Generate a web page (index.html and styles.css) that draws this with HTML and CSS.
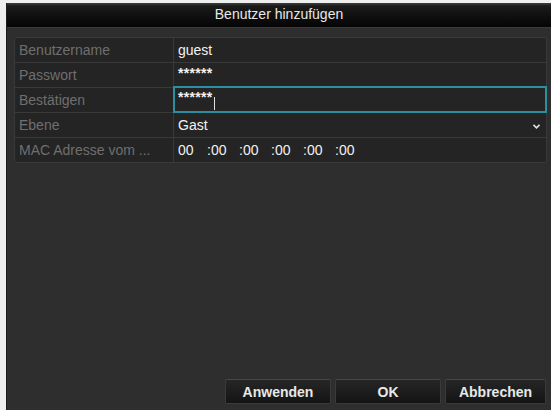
FILE: index.html
```html
<!DOCTYPE html>
<html lang="de">
<head>
<meta charset="utf-8">
<title>Benutzer hinzufügen</title>
<link rel="stylesheet" href="styles.css">
</head>
<body>
<div class="dialog">
  <div class="title">Benutzer hinzufügen</div>
  <div class="form">
    <div class="row">
      <div class="label">Benutzername</div>
      <div class="value">guest</div>
    </div>
    <div class="row">
      <div class="label">Passwort</div>
      <div class="value stars">******</div>
    </div>
    <div class="row">
      <div class="label">Bestätigen</div>
      <div class="value stars focused">******<span class="caret"></span></div>
    </div>
    <div class="row">
      <div class="label">Ebene</div>
      <div class="value select">Gast<svg class="arrow" width="7" height="5" viewBox="0 0 7 5"><path d="M0.5 0.8 L3.5 3.8 L6.5 0.8" fill="none" stroke="#e0e0e0" stroke-width="1.6"/></svg></div>
    </div>
    <div class="row">
      <div class="label">MAC Adresse vom ...</div>
      <div class="value mac"><span class="oct first">00</span><span class="oct">:00</span><span class="oct">:00</span><span class="oct">:00</span><span class="oct">:00</span><span class="oct">:00</span></div>
    </div>
  </div>
  <div class="spacer"></div>
  <div class="buttons">
    <button class="btn">Anwenden</button>
    <button class="btn">OK</button>
    <button class="btn">Abbrechen</button>
  </div>
</div>
</body>
</html>
```
FILE: styles.css
```css
html, body {
  margin: 0;
  padding: 0;
  background: #eeeeee;
  width: 551px;
  height: 410px;
  overflow: hidden;
  font-family: "Liberation Sans", Arial, sans-serif;
}
.dialog {
  margin: 3px 0 0 6px;
  height: 407px;
  background: #2e2e2e;
  display: flex;
  flex-direction: column;
  border-left: 1px solid #1c1c1c;
  box-sizing: border-box;
}
.title {
  height: 24px;
  line-height: 23px;
  text-align: center;
  color: #e8e8e8;
  font-size: 14px;
  background: linear-gradient(#3e3e3e 0, #1a1a1a 3px, #0e0e0e 60%, #050505 100%);
  border-bottom: 1px solid #3a3a3a;
}
.form {
  margin: 9px 4px 0 7px;
  border: 1px solid #393939;
  border-radius: 3px;
  background: #242424;
}
.row {
  display: grid;
  grid-template-columns: 159px 1fr;
  height: 25px;
  border-top: 1px solid #393939;
  box-sizing: border-box;
}
.row:first-child {
  border-top: none;
  height: 24px;
}
.label {
  color: #6f6f6f;
  font-size: 14px;
  line-height: 24px;
  padding-left: 4px;
  border-right: 1px solid #393939;
  white-space: nowrap;
  overflow: hidden;
}
.value {
  color: #f2f2f2;
  font-size: 14px;
  line-height: 24px;
  padding-left: 4px;
  position: relative;
}
.stars {
  font-size: 14px;
  font-weight: bold;
  line-height: 20px;
  letter-spacing: 0.3px;
}
.focused {
  border: 2px solid #2b8fa0;
  margin: -2px -1px -1px -1px;
  padding-left: 3px;
  line-height: 18px;
}
.caret {
  display: inline-block;
  width: 1px;
  height: 13px;
  background: #e0e0e0;
  vertical-align: -8px;
  margin-left: 1px;
}
.select {
  display: flex;
  align-items: center;
  justify-content: space-between;
  padding-right: 6px;
}
.arrow {
  margin-top: 2px;
}
.mac {
  display: flex;
}
.oct {
  display: inline-block;
  width: 32px;
}
.oct.first {
  width: 29px;
}
.spacer {
  flex: 1;
}
.buttons {
  display: flex;
  justify-content: flex-end;
  gap: 4px;
  padding: 0 5px 6px 0;
}
.btn {
  width: 106px;
  height: 25px;
  border: 1px solid #3a3a3a;
  border-top-color: #474747;
  border-radius: 2px;
  background: linear-gradient(#262626, #141414);
  color: #e8e8e8;
  font-family: "Liberation Sans", Arial, sans-serif;
  font-size: 14px;
  font-weight: bold;
  padding: 0;
}
.btn:last-child {
  width: 101px;
}
```
